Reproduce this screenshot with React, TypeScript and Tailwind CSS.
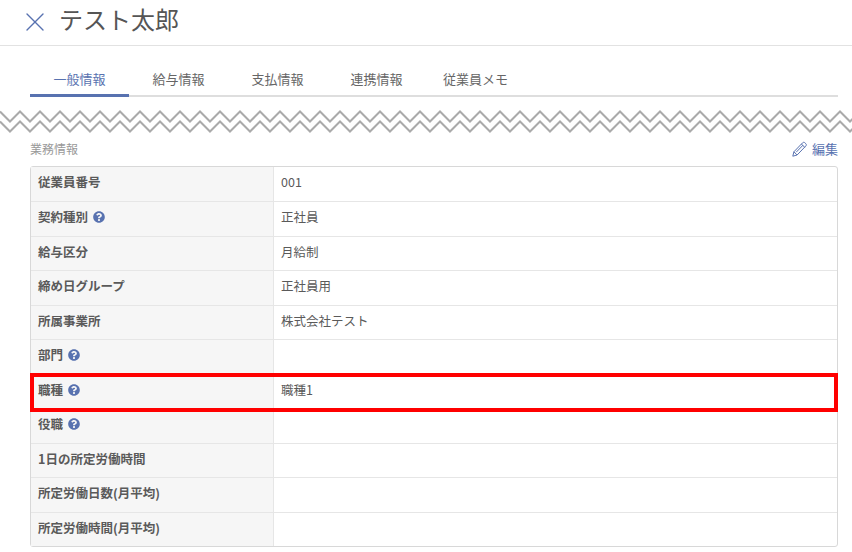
import React from 'react';
import { X } from 'lucide-react';
import { FaQuestionCircle } from 'react-icons/fa';

const FONT = '"Noto Sans CJK JP", "Noto Sans", sans-serif';

const tabs = ['一般情報', '給与情報', '支払情報', '連携情報', '従業員メモ'];

const rows: { label: string; value?: string; help?: boolean; marked?: boolean }[] = [
  { label: '従業員番号', value: '001' },
  { label: '契約種別', value: '正社員', help: true },
  { label: '給与区分', value: '月給制' },
  { label: '締め日グループ', value: '正社員用' },
  { label: '所属事業所', value: '株式会社テスト' },
  { label: '部門', help: true },
  { label: '職種', value: '職種1', help: true, marked: true },
  { label: '役職', help: true },
  { label: '1日の所定労働時間' },
  { label: '所定労働日数(月平均)' },
  { label: '所定労働時間(月平均)' },
];

// two stacked zigzag lines marking the cut in the screenshot
const zigzag = (y: number) => {
  const pts: string[] = [];
  for (let i = 0; i <= 86; i++) {
    pts.push(`${i * 10},${i % 2 === 0 ? y : y + 10}`);
  }
  return pts.join(' ');
};

const PencilIcon = () => (
  <svg width="15" height="16" viewBox="0 0 15 16" fill="none" stroke="currentColor" strokeWidth="1" strokeLinejoin="round">
    <path d="M0.8 15.2l1.1-4.4 8.6-8.9c.8-.8 1.7-.8 2.4-.1l.9.9c.7.7.7 1.6-.1 2.4l-8.6 8.9z" />
    <path d="M1.9 10.8l3.2 3.2M9.4 3l3.3 3.3M4.2 11.2l6.8-7" />
  </svg>
);

export default function App() {
  return (
    <div className="w-[852px] h-[552px] overflow-hidden bg-white text-[#555]" style={{ fontFamily: FONT }}>
      {/* Header */}
      <div className="h-[46px] border-b border-[#e2e2e2] flex items-center pl-[19px] pb-[1px]">
        <X size={32} strokeWidth={1.05} className="text-[#5872b0]" />
        <h1 className="ml-[8px] mb-[7px] text-[24px] leading-none font-normal text-[#555]">テスト太郎</h1>
      </div>

      {/* Tabs */}
      <div className="mt-[23px] ml-[30px] w-[808px] h-[28px] flex border-b-2 border-[#dedede]">
        {tabs.map((tab, i) => (
          <div
            key={tab}
            className={`w-[99px] h-[28px] text-center text-[13px] leading-[20px] ${
              i === 0 ? 'text-[#5872b0] border-b-[3px] border-[#5872b0]' : 'text-[#666]'
            }`}
          >
            {tab}
          </div>
        ))}
      </div>

      {/* Cut marker */}
      <svg width="852" height="26" viewBox="0 0 852 26" className="block mt-[13px]" fill="none" stroke="#aaaaaa" strokeWidth="2">
        <polyline points={zigzag(1.5)} />
        <polyline points={zigzag(11.5)} />
      </svg>

      {/* Section heading */}
      <div className="mt-[1px] mb-[4.5px] ml-[30px] w-[808px] h-[24px] flex items-center justify-between">
        <span className="text-[12px] leading-none text-[#999]">業務情報</span>
        <span className="flex items-center gap-[5px] mb-[1px] text-[13px] leading-none text-[#5872b0]">
          <PencilIcon />
          編集
        </span>
      </div>

      {/* Detail table */}
      <div className="ml-[30px] w-[808px] border border-[#d8d8d8] rounded-[3px]">
        {rows.map((row, i) => (
          <div
            key={row.label}
            className={`relative grid grid-cols-[243px_1fr] h-[34.5px] text-[12.5px] ${
              i > 0 ? 'border-t border-[#e6e6e6]' : ''
            }`}
          >
            <div className="bg-[#f6f6f6] border-r border-[#e6e6e6] pl-[7px] pt-[6px] leading-[18px] font-bold text-[#5a5a5a] flex items-start gap-[5px]">
              {row.label}
              {row.help && <FaQuestionCircle size={12} className="text-[#5872b0] mt-[3px]" />}
            </div>
            <div className="pl-[7px] pt-[6px] leading-[18px] text-[#5a5a5a]">{row.value}</div>
            {row.marked && (
              <div className="absolute z-10 -left-px -right-px -top-[2px] bottom-[-4px] border-4 border-[#ff0000]" />
            )}
          </div>
        ))}
      </div>
    </div>
  );
}
